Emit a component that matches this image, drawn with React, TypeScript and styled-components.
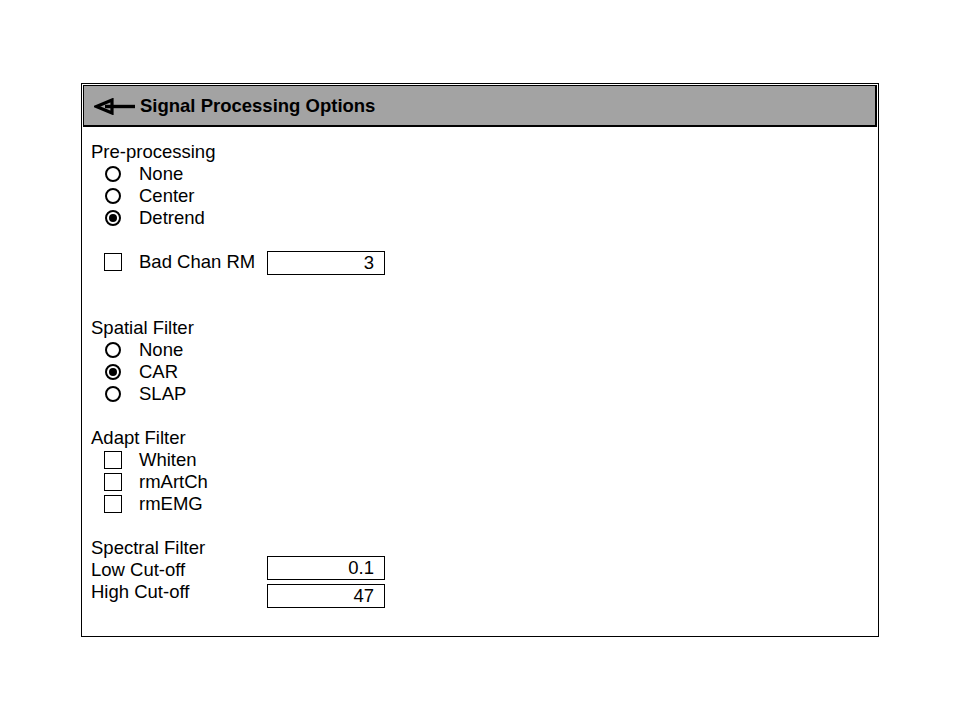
import React from 'react';
import styled, {createGlobalStyle} from "styled-components";

const GlobalStyle = createGlobalStyle`
  body {
    margin: 0;
    background: #ffffff;
    font-family: "Liberation Sans", Arial, sans-serif;
    color: #000000;
  }
`

const BackArrow = () => (
  <svg width="41" height="17" viewBox="0 0 41 17">
    <path d="M2.5 8.5 L18 2 L18 15 Z" fill="none" stroke="#000" strokeWidth="3.2" strokeLinejoin="miter"/>
    <line x1="11" y1="8.5" x2="41" y2="8.5" stroke="#000" strokeWidth="3.4"/>
  </svg>
);

type Opt = { label: string; checked?: boolean };

const RadioGroup = ({title, options}: { title: string; options: Opt[] }) => (
  <div>
    <Line>{title}</Line>
    {options.map(o => (
      <OptionRow key={o.label}>
        <Slot><Radio $checked={!!o.checked}/></Slot>
        <span>{o.label}</span>
      </OptionRow>
    ))}
  </div>
);

export default function App() {
  return (
    <Stage>
      <GlobalStyle/>
      <Frame>
        <Header>
          <BackArrow/>
          <Title>Signal Processing Options</Title>
        </Header>

        <Body>
          <Group $after={22}>
            <RadioGroup title="Pre-processing" options={[
              {label: "None"}, {label: "Center"}, {label: "Detrend", checked: true},
            ]}/>
          </Group>

          <Group $after={44}>
            <FieldRow $indent={13}>
              <Slot><CheckBox/></Slot>
              <span>Bad Chan RM</span>
              <Field $shift={0}>3</Field>
            </FieldRow>
          </Group>

          <Group $after={22}>
            <RadioGroup title="Spatial Filter" options={[
              {label: "None"}, {label: "CAR", checked: true}, {label: "SLAP"},
            ]}/>
          </Group>

          <Group $after={22}>
            <Line>Adapt Filter</Line>
            {["Whiten", "rmArtCh", "rmEMG"].map(l => (
              <OptionRow key={l}>
                <Slot><CheckBox/></Slot>
                <span>{l}</span>
              </OptionRow>
            ))}
          </Group>

          <Group $after={0}>
            <Line>Spectral Filter</Line>
            <FieldRow $indent={0}>
              <span>Low Cut-off</span>
              <Field $shift={-3}>0.1</Field>
            </FieldRow>
            <FieldRow $indent={0}>
              <span>High Cut-off</span>
              <Field $shift={3}>47</Field>
            </FieldRow>
          </Group>
        </Body>
      </Frame>
    </Stage>
  );
}

const Stage = styled.div`
  padding: 83px 0 0 81px;
`

const Frame = styled.div`
  box-sizing: border-box;
  width: 798px;
  height: 554px;
  border: 1px solid #000;
`

const Header = styled.div`
  box-sizing: border-box;
  margin: 1px;
  height: 42px;
  display: flex;
  align-items: center;
  gap: 5px;
  padding: 1px 0 0 10px;
  background: #a3a3a3;
  border-style: solid;
  border-color: #000;
  border-width: 1px 2px 2px 1px;
`

const Title = styled.span`
  font-size: 18.5px;
  font-weight: bold;
`

const Body = styled.div`
  padding: 13px 0 0 9px;
  font-size: 18.5px;
`

const Group = styled.div<{ $after: number }>`
  margin-bottom: ${p => p.$after}px;
`

const Line = styled.div`
  height: 22px;
  line-height: 22px;
  white-space: nowrap;
`

const OptionRow = styled.div`
  display: flex;
  align-items: center;
  height: 22px;
  line-height: 22px;
  padding-left: 13px;
  gap: 17px;
`

const Slot = styled.div`
  align-self: center;
  width: 18px;
  height: 18px;
  display: flex;
  align-items: center;
  justify-content: center;
`

const Radio = styled.div<{ $checked: boolean }>`
  box-sizing: border-box;
  width: 16px;
  height: 16px;
  border: 2px solid #000;
  border-radius: 50%;
  display: flex;
  align-items: center;
  justify-content: center;

  &::after {
    content: "";
    display: ${p => (p.$checked ? "block" : "none")};
    width: 8px;
    height: 8px;
    border-radius: 50%;
    background: #000;
  }
`

const CheckBox = styled.div`
  box-sizing: border-box;
  width: 18px;
  height: 18px;
  border: 1px solid #000;
  background: #fff;
`

const FieldRow = styled.div<{ $indent: number }>`
  box-sizing: border-box;
  display: flex;
  align-items: flex-start;
  width: 294px;
  height: 22px;
  line-height: 22px;
  padding-left: ${p => p.$indent}px;
  white-space: nowrap;

  ${Slot} {
    margin-right: 17px;
  }

  & > span {
    flex: 0 0 auto;
  }
`

const Field = styled.div<{ $shift: number }>`
  box-sizing: border-box;
  margin-left: auto;
  margin-top: ${p => p.$shift}px;
  width: 118px;
  height: 24px;
  line-height: 22px;
  border: 1px solid #000;
  padding-right: 10px;
  text-align: right;
  background: #fff;
`
